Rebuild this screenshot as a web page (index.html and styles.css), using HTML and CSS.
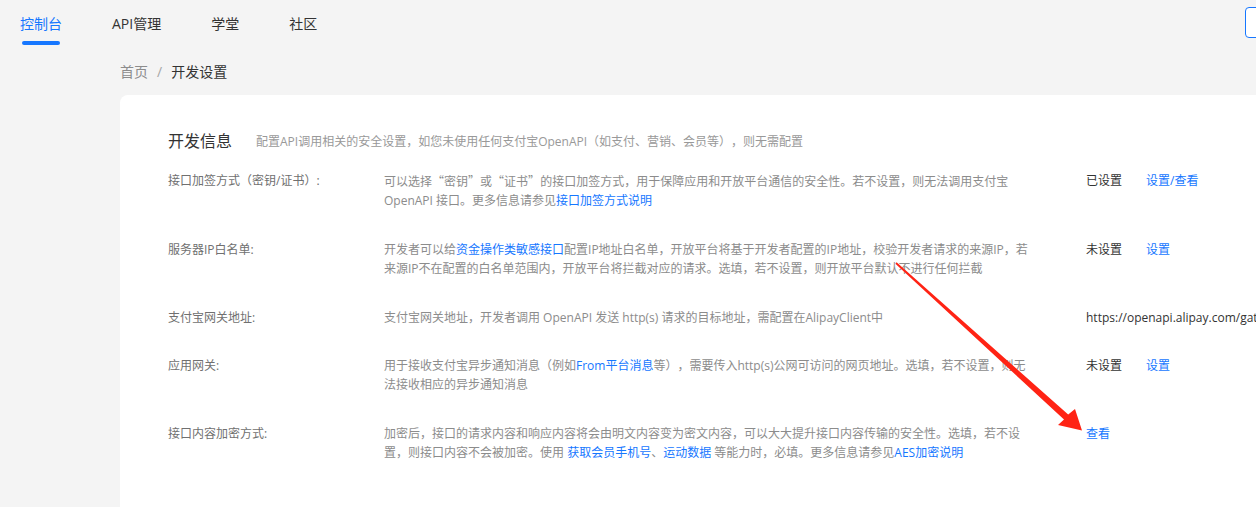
FILE: index.html
```html
<!DOCTYPE html>
<html lang="zh-CN">
<head>
<meta charset="utf-8">
<title>开发设置</title>
<link rel="stylesheet" href="styles.css">
</head>
<body>
<div class="page">
  <header class="topbar">
    <nav class="nav">
      <a class="nav-item active"><span class="nav-text">控制台</span><span class="nav-bar"></span></a>
      <a class="nav-item"><span class="nav-text">API管理</span></a>
      <a class="nav-item"><span class="nav-text">学堂</span></a>
      <a class="nav-item"><span class="nav-text">社区</span></a>
    </nav>
    <div class="top-btn"></div>
  </header>

  <div class="breadcrumb">
    <span class="crumb-home">首页</span>
    <span class="crumb-sep">/</span>
    <span class="crumb-current">开发设置</span>
  </div>

  <section class="card">
    <div class="card-head">
      <h2 class="card-title">开发信息</h2>
      <span class="card-sub">配置API调用相关的安全设置，如您未使用任何支付宝OpenAPI（如支付、营销、会员等），则无需配置</span>
    </div>

    <div class="row">
      <div class="label">接口加签方式（密钥/证书）:</div>
      <div class="desc">可以选择<span class="cjk">“</span>密钥<span class="cjk">”</span>或<span class="cjk">“</span>证书<span class="cjk">”</span>的接口加签方式，用于保障应用和开放平台通信的安全性。若不设置，则无法调用支付宝 OpenAPI 接口。更多信息请参见<a class="link">接口加签方式说明</a></div>
      <div class="status">已设置</div>
      <div class="action"><a class="link">设置/查看</a></div>
    </div>

    <div class="row">
      <div class="label">服务器IP白名单:</div>
      <div class="desc">开发者可以给<a class="link">资金操作类敏感接口</a>配置IP地址白名单，开放平台将基于开发者配置的IP地址，校验开发者请求的来源IP，若来源IP不在配置的白名单范围内，开放平台将拦截对应的请求。选填，若不设置，则开放平台默认不进行任何拦截</div>
      <div class="status">未设置</div>
      <div class="action"><a class="link">设置</a></div>
    </div>

    <div class="row single">
      <div class="label">支付宝网关地址:</div>
      <div class="desc">支付宝网关地址，开发者调用 OpenAPI 发送 http(s) 请求的目标地址，需配置在AlipayClient中</div>
      <div class="status wide">https://openapi.alipay.com/gateway.do</div>
    </div>

    <div class="row">
      <div class="label">应用网关:</div>
      <div class="desc">用于接收支付宝异步通知消息（例如<a class="link">From平台消息</a>等），需要传入http(s)公网可访问的网页地址。选填，若不设置，则无法接收相应的异步通知消息</div>
      <div class="status">未设置</div>
      <div class="action"><a class="link">设置</a></div>
    </div>

    <div class="row">
      <div class="label">接口内容加密方式:</div>
      <div class="desc">加密后，接口的请求内容和响应内容将会由明文内容变为密文内容，可以大大提升接口内容传输的安全性。选填，若不设置，则接口内容不会被加密。使用 <a class="link">获取会员手机号</a>、<a class="link">运动数据</a> 等能力时，必填。更多信息请参见<a class="link">AES加密说明</a></div>
      <div class="status"><a class="link">查看</a></div>
    </div>
  </section>
</div>

<svg class="annotation" width="1256" height="507" viewBox="0 0 1256 507" aria-hidden="true">
  <polygon fill="#ff2314" points="896.6,262.3 1068.2,414.6 1075,409 1082,430.5 1058,425 1064.0,419.5 895.4,263.7"/>
</svg>
</body>
</html>
```

FILE: styles.css
```css
html, body {
  margin: 0;
  padding: 0;
}

body {
  background: #f4f4f4;
  font-family: "Open Sans", "Noto Sans CJK SC", sans-serif;
  color: #333;
  overflow: hidden;
  width: 1256px;
  height: 507px;
  position: relative;
  text-spacing-trim: space-all;
}

.cjk {
  font-family: "Noto Sans CJK SC", sans-serif;
}

.page {
  width: 1340px;
}

.topbar {
  display: flex;
  align-items: flex-start;
  justify-content: space-between;
  padding: 0 20px;
  height: 45px;
}

.nav {
  display: flex;
  gap: 50px;
}

.nav-item {
  display: flex;
  flex-direction: column;
  align-items: center;
  padding-top: 14px;
  font-size: 14px;
  line-height: 20px;
  color: #333;
  cursor: pointer;
}

.nav-item.active {
  color: #1677ff;
}

.nav-bar {
  display: block;
  width: 38px;
  height: 4px;
  margin-top: 7px;
  border-radius: 2px;
  background: #1677ff;
}

.top-btn {
  margin-top: 7px;
  width: 73px;
  height: 29px;
  border: 1px solid #1677ff;
  border-radius: 4px;
  background: #fff;
}

.breadcrumb {
  display: flex;
  align-items: center;
  gap: 9px;
  margin: 17px 0 0 120px;
  font-size: 14px;
  line-height: 20px;
}

.crumb-home {
  color: #8c8c8c;
}

.crumb-sep {
  color: #a6a6a6;
}

.crumb-current {
  color: #333;
}

.card {
  margin: 13px 0 0 120px;
  background: #fff;
  border-radius: 8px;
  padding: 34px 0 60px 48px;
}

.card-head {
  display: flex;
  align-items: center;
  gap: 24px;
  margin-bottom: 18px;
}

.card-title {
  margin: 0;
  font-size: 16px;
  line-height: 24px;
  font-weight: normal;
  color: #333;
}

.card-sub {
  font-size: 12px;
  line-height: 19px;
  color: #999;
}

.row {
  display: flex;
  align-items: flex-start;
  font-size: 12px;
  line-height: 19px;
  margin-bottom: 30px;
}

.row.single {
  margin-bottom: 29px;
}

.label {
  flex: 0 0 216px;
  color: #707070;
}

.desc {
  flex: 0 0 646px;
  color: #8c8c8c;
}

.status {
  flex: 0 0 60px;
  margin-left: 56px;
  color: #333;
  white-space: nowrap;
}

.status.wide {
  flex: 0 0 auto;
}

.action {
  white-space: nowrap;
}

.link {
  color: #1677ff;
  text-decoration: none;
  cursor: pointer;
}

.annotation {
  position: absolute;
  left: 0;
  top: 0;
  pointer-events: none;
}
```
